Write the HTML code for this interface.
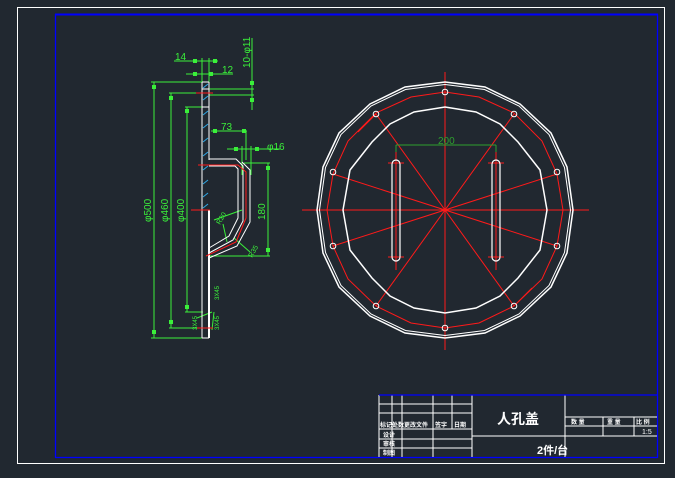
<!DOCTYPE html>
<html><head><meta charset="utf-8"><style>
html,body{margin:0;padding:0;background:#212830;}
svg{display:block}
text{font-family:"Liberation Sans","Noto Sans CJK SC",sans-serif;}
</style></head><body>
<svg width="675" height="478" viewBox="0 0 675 478" xmlns="http://www.w3.org/2000/svg">
<rect width="675" height="478" fill="#212830"/>
<rect x="17.5" y="7.5" width="647" height="456" fill="none" stroke="#fff" stroke-width="1"/>
<rect x="55.5" y="14.5" width="602" height="443" fill="none" stroke="#0000ff" stroke-width="1.3"/>
<line x1="55" y1="14.5" x2="658" y2="14.5" stroke="#0000ff" stroke-width="2"/>

<!-- Side view -->
<g fill="none" stroke-width="1">
<g stroke="#3af03a">
<line x1="154" y1="82" x2="154" y2="338"/>
<line x1="151" y1="82" x2="203" y2="82"/>
<line x1="151" y1="338" x2="203" y2="338"/>
<line x1="171" y1="93" x2="171" y2="328"/>
<line x1="169" y1="93" x2="203" y2="93"/>
<line x1="169" y1="328" x2="203" y2="328"/>
<line x1="187" y1="107" x2="187" y2="312"/>
<line x1="185" y1="107" x2="203" y2="107"/>
<line x1="185" y1="312" x2="203" y2="312"/>
<line x1="174" y1="61" x2="218" y2="61"/>
<line x1="186" y1="74" x2="233" y2="74"/>
<line x1="202" y1="58" x2="202" y2="82"/>
<line x1="209" y1="58" x2="209" y2="82"/>
<line x1="252" y1="38" x2="252" y2="110"/>
<line x1="209" y1="89" x2="254" y2="89"/>
<line x1="209" y1="95" x2="254" y2="95"/>
<line x1="211" y1="131" x2="247" y2="131"/>
<line x1="246" y1="131" x2="246" y2="160"/>
<line x1="227" y1="149" x2="280" y2="149"/>
<line x1="242" y1="146" x2="242" y2="175"/>
<line x1="251" y1="146" x2="251" y2="175"/>
<line x1="268" y1="163" x2="268" y2="256"/>
<line x1="244" y1="163" x2="270" y2="163"/>
<line x1="210" y1="256" x2="270" y2="256"/>
<line x1="214" y1="220" x2="242" y2="210"/>
<line x1="223" y1="224" x2="227" y2="242"/>
<line x1="234" y1="238" x2="250" y2="252"/>
<line x1="197" y1="318" x2="212" y2="312"/>
<line x1="212" y1="330" x2="214" y2="312"/>
</g>
<g fill="#3af03a">
<rect x="152" y="85" width="4" height="4"/><rect x="152" y="330" width="4" height="4"/>
<rect x="169" y="96" width="4" height="4"/><rect x="169" y="320" width="4" height="4"/>
<rect x="185" y="109" width="4" height="4"/><rect x="185" y="305" width="4" height="4"/>
<rect x="193" y="59" width="4" height="4"/><rect x="213" y="59" width="4" height="4"/>
<rect x="193" y="72" width="4" height="4"/><rect x="209" y="72" width="4" height="4"/>
<rect x="250" y="81" width="4" height="4"/><rect x="250" y="98" width="4" height="4"/>
<rect x="213" y="129" width="4" height="4"/><rect x="242" y="129" width="4" height="4"/>
<rect x="234" y="147" width="4" height="4"/><rect x="255" y="147" width="4" height="4"/>
<rect x="266" y="166" width="4" height="4"/><rect x="266" y="248" width="4" height="4"/>
</g>
<g stroke="#fff">
<line x1="202" y1="82" x2="202" y2="338"/>
<line x1="209" y1="82" x2="209" y2="160"/>
<line x1="209" y1="210" x2="209" y2="338" stroke-width="2"/>
<line x1="202" y1="338" x2="209" y2="338"/>
<line x1="202" y1="82" x2="209" y2="82"/>
<line x1="202" y1="89" x2="209" y2="89"/>
<line x1="202" y1="107" x2="209" y2="107"/>
<path d="M209 159 H236 L243 166 V221 L233 240 L209 253"/>
<path d="M209 166 H235 L238 169 V218 L229 236 L209 248"/>
<path d="M209 258 L237 246 L250 222 V170 L242 162"/>
</g>
<g stroke="#ff1a1a">
<path d="M198 165 H238 L246 172 V218 L236 242 L206 256"/>
<line x1="196" y1="93" x2="213" y2="93"/>
<line x1="191" y1="210" x2="210" y2="210"/>
<line x1="197" y1="328" x2="213" y2="328"/>
</g>
<g stroke="#2fa8e6">
<line x1="203" y1="88" x2="208" y2="84"/><line x1="203" y1="100" x2="208" y2="96"/>
<line x1="203" y1="115" x2="208" y2="111"/><line x1="203" y1="128" x2="208" y2="124"/>
<line x1="203" y1="142" x2="208" y2="138"/><line x1="203" y1="156" x2="208" y2="152"/>
<line x1="203" y1="170" x2="208" y2="166"/><line x1="203" y1="184" x2="208" y2="180"/>
<line x1="203" y1="197" x2="208" y2="193"/><line x1="203" y1="208" x2="208" y2="204"/>
</g>
</g>
<g fill="#3af03a" font-size="10">
<text x="175" y="60">14</text>
<text x="222" y="73">12</text>
<text transform="translate(250,68) rotate(-90)">10-φ11</text>
<text x="221" y="130">73</text>
<text x="267" y="150">φ16</text>
<text transform="translate(151,222) rotate(-90)">φ500</text>
<text transform="translate(168,222) rotate(-90)">φ460</text>
<text transform="translate(184,222) rotate(-90)">φ400</text>
<text transform="translate(265,220) rotate(-90)">180</text>
<text transform="translate(220,225) rotate(-60)" font-size="7">R20</text>
<text transform="translate(252,258) rotate(-60)" font-size="7">R35</text>
<text transform="translate(197,330) rotate(-90)" font-size="6">3X45</text>
<text transform="translate(219,300) rotate(-90)" font-size="6">3X45</text>
<text transform="translate(219,330) rotate(-90)" font-size="6">3X45</text>
</g>

<!-- Front view -->
<g fill="none">
<g stroke="#ff1a1a" stroke-width="1">
<line x1="302" y1="210" x2="589" y2="210"/>
<line x1="445" y1="72" x2="445" y2="350"/>
<line x1="396" y1="150" x2="396" y2="270"/>
<line x1="496" y1="150" x2="496" y2="270"/>
<line x1="388" y1="163" x2="404" y2="163"/><line x1="388" y1="257" x2="404" y2="257"/>
<line x1="488" y1="163" x2="504" y2="163"/><line x1="488" y1="257" x2="504" y2="257"/>
<line x1="376" y1="114" x2="514" y2="306"/>
<line x1="514" y1="114" x2="376" y2="306"/>
<line x1="333" y1="174" x2="557" y2="246"/>
<line x1="557" y1="174" x2="333" y2="246"/>
<line x1="358" y1="132" x2="376" y2="114"/>
<line x1="532" y1="288" x2="514" y2="306"/>
<path d="M445 92 L479 97 L514 113 L542 141 L557 174 L563 210 L557 246 L542 279 L514 306 L479 323 L445 328 L411 323 L376 306 L348 279 L333 246 L327 210 L333 174 L348 141 L376 113 L411 97 Z"/>
</g>
<g stroke="#fff" stroke-width="1.5">
<path d="M445 82 L485 87 L520 104 L551 133 L567 167 L573 210 L567 253 L551 287 L520 316 L485 333 L445 338 L405 333 L370 316 L339 287 L323 253 L317 210 L323 167 L339 133 L370 104 L405 87 Z"/>
<path d="M445 84.5 L484.5 89.5 L519 106 L549 134.5 L564.5 167.5 L570.5 210 L564.5 252.5 L549 285.5 L519 314 L484.5 330.5 L445 335.5 L405.5 330.5 L371 314 L341 285.5 L325.5 252.5 L319.5 210 L325.5 167.5 L341 134.5 L371 106 L405.5 89.5 Z" stroke-width="1"/>
<path d="M445 107 L476 112 L500 124 L518 142 L540 170 L547 210 L540 250 L518 278 L500 296 L476 308 L445 313 L414 308 L390 296 L372 278 L350 250 L343 210 L350 170 L372 142 L390 124 L414 112 Z"/>
<rect x="392" y="160" width="8" height="101" rx="4" stroke-width="1.2"/>
<rect x="492" y="160" width="8" height="101" rx="4" stroke-width="1.2"/>
<g stroke-width="1">
<circle cx="445" cy="92" r="2.8"/><circle cx="445" cy="328" r="2.8"/>
<circle cx="376" cy="114" r="2.8"/><circle cx="514" cy="114" r="2.8"/>
<circle cx="376" cy="306" r="2.8"/><circle cx="514" cy="306" r="2.8"/>
<circle cx="333" cy="172" r="2.8"/><circle cx="557" cy="172" r="2.8"/>
<circle cx="333" cy="246" r="2.8"/><circle cx="557" cy="246" r="2.8"/>
</g>
</g>
<g stroke="#2ea02e" stroke-width="1">
<line x1="396" y1="145" x2="496" y2="145"/>
<line x1="396" y1="145" x2="396" y2="152"/><line x1="496" y1="145" x2="496" y2="152"/>
</g>
<text x="438" y="144" fill="#2ea02e" font-size="10">200</text>
</g>

<!-- Title block -->
<g stroke="#fff" stroke-width="1" fill="none">
<line x1="379" y1="395" x2="379" y2="457"/>
<line x1="392" y1="395" x2="392" y2="457"/>
<line x1="402" y1="395" x2="402" y2="457"/>
<line x1="433" y1="395" x2="433" y2="457"/>
<line x1="452" y1="395" x2="452" y2="429"/>
<line x1="472" y1="395" x2="472" y2="457"/>
<line x1="565" y1="395" x2="565" y2="457"/>
<line x1="603" y1="417" x2="603" y2="436"/>
<line x1="634" y1="417" x2="634" y2="436"/>
<line x1="379" y1="404" x2="472" y2="404"/>
<line x1="379" y1="413" x2="472" y2="413"/>
<line x1="379" y1="429" x2="472" y2="429"/>
<line x1="379" y1="439" x2="472" y2="439"/>
<line x1="379" y1="448" x2="472" y2="448"/>
<line x1="565" y1="417" x2="657" y2="417"/>
<line x1="565" y1="426" x2="657" y2="426"/>
<line x1="472" y1="436" x2="657" y2="436"/>
</g>
<g stroke="#0000ff" stroke-width="1.3"><line x1="379" y1="395" x2="657" y2="395"/></g>
<g fill="#fff" font-weight="bold">
<text x="497" y="424" font-size="14">人孔盖</text>
<text x="537" y="454" font-size="11">2件/台</text>
<text x="380" y="427" font-size="6">标记处数</text>
<text x="404" y="427" font-size="6">更改文件</text>
<text x="435" y="427" font-size="6">签字</text>
<text x="454" y="427" font-size="6">日期</text>
<text x="383" y="437" font-size="6">设计</text>
<text x="383" y="446" font-size="6">审核</text>
<text x="383" y="455" font-size="6">制图</text>
<text x="571" y="424" font-size="6">数  量</text>
<text x="607" y="424" font-size="6">重 量</text>
<text x="636" y="424" font-size="6">比 例</text>
<text x="642" y="434" font-size="7" font-weight="normal">1:5</text>
</g>
</svg>
</body></html>
